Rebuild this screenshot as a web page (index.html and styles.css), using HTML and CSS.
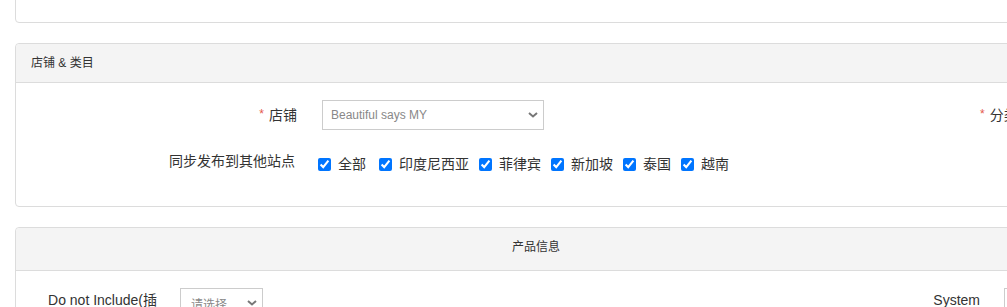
FILE: index.html
```html
<!DOCTYPE html>
<html>
	<head>
		<meta charset="UTF-8">
		<title>产品编辑</title>
		<link rel="stylesheet" href="styles.css">
	</head>
	<body>
		<div id="wrap">
			<div class="panel panel-top"></div>

			<div class="panel">
				<div class="panel-heading">店铺 &amp; 类目</div>
				<div class="panel-body">
					<div class="form-row">
						<label class="field-label"><span class="req">*</span>店铺</label>
						<div class="select select-shop">
							<span>Beautiful says MY</span>
							<svg width="10" height="6" viewBox="0 0 10 6"><path d="M1 1l4 3.5L9 1" fill="none" stroke="#777" stroke-width="2"/></svg>
						</div>
						<label class="field-label field-right"><span class="req">*</span>分类</label>
					</div>
					<div class="form-row row-sync">
						<label class="field-label sync-label">同步发布到其他站点</label>
						<div class="checks">
							<label class="check check-all"><input type="checkbox" checked>全部</label>
							<label class="check"><input type="checkbox" checked>印度尼西亚</label>
							<label class="check"><input type="checkbox" checked>菲律宾</label>
							<label class="check"><input type="checkbox" checked>新加坡</label>
							<label class="check"><input type="checkbox" checked>泰国</label>
							<label class="check"><input type="checkbox" checked>越南</label>
						</div>
					</div>
				</div>
			</div>

			<div class="panel">
				<div class="panel-heading heading-center">产品信息</div>
				<div class="panel-body product-body">
					<div class="form-row row-product">
						<label class="prod-label">Do not Include(插入产品)</label>
						<div class="select select-small">
							<span>请选择</span>
							<svg width="10" height="6" viewBox="0 0 10 6"><path d="M1 1l4 3.5L9 1" fill="none" stroke="#777" stroke-width="2"/></svg>
						</div>
						<label class="sys-label">System</label>
						<div class="sys-box"></div>
					</div>
				</div>
			</div>
		</div>
	</body>
</html>
```

FILE: styles.css
```css
*{
	margin:0px;
	padding:0px;
	box-sizing:border-box;
}
html,body{
	overflow:hidden;
}
body{
	font-family:"Liberation Sans",Arial,"Noto Sans CJK SC",sans-serif;
	color:#333;
	background:#fff;
}
#wrap{
	padding-left:15px;
	width:1100px;
}
.panel{
	width:1042px;
	border:1px solid #dcdcdc;
	border-radius:4px;
	margin-top:20px;
	background:#fff;
}
.panel-top{
	height:53px;
	margin-top:-30px;
}
.panel-heading{
	height:39px;
	line-height:38px;
	background:#f4f4f4;
	border-bottom:1px solid #dcdcdc;
	border-radius:4px 4px 0 0;
	font-size:12px;
	padding-left:15px;
}
.heading-center{
	height:43px;
	line-height:20px;
	padding:9px 0 0 0;
	text-align:center;
}
.panel-body{
	padding:17px 0 32px 0;
}
.form-row{
	display:flex;
	align-items:center;
}
.form-row > *{
	flex-shrink:0;
}
.field-label{
	width:281px;
	text-align:right;
	font-size:14px;
	line-height:20px;
	color:#333;
}
.sync-label{
	padding-right:2px;
}
.req{
	color:#e4574c;
	font-size:12px;
	margin-right:5px;
	position:relative;
	top:-2px;
}
.select{
	height:30px;
	border:1px solid #ccc;
	background:#fff;
	display:flex;
	align-items:center;
	justify-content:space-between;
	font-size:12px;
	color:#888;
	padding:0 5px 0 8px;
	white-space:nowrap;
}
.select-shop{
	width:222px;
	margin-left:25px;
}
.field-right{
	width:auto;
	text-align:left;
	margin-left:436px;
	white-space:nowrap;
}
.row-sync{
	margin-top:21px;
	align-items:flex-start;
}
.checks{
	display:flex;
	margin-left:21px;
	margin-top:3px;
}
.check{
	display:flex;
	align-items:center;
	font-size:14px;
	line-height:20px;
	color:#333;
	margin-right:10px;
	white-space:nowrap;
}
.check-all{
	margin-right:13px;
}
.check input{
	width:13px;
	height:13px;
	margin:0 7px 0 0;
	accent-color:#0075ff;
}
.product-body{
	padding-bottom:40px;
}
.row-product{
	align-items:flex-start;
}
.prod-label{
	width:112px;
	margin-left:29px;
	margin-top:2px;
	text-align:right;
	font-size:14px;
	line-height:20px;
	color:#333;
}
.select-small{
	width:83px;
	margin-left:23px;
	padding:0 5px 0 10px;
}
.sys-label{
	width:120px;
	margin-left:597px;
	margin-top:2px;
	text-align:right;
	font-size:14px;
	line-height:20px;
	color:#333;
}
.sys-box{
	width:50px;
	height:30px;
	margin-left:24px;
	border:1px solid #ccc;
}
```
